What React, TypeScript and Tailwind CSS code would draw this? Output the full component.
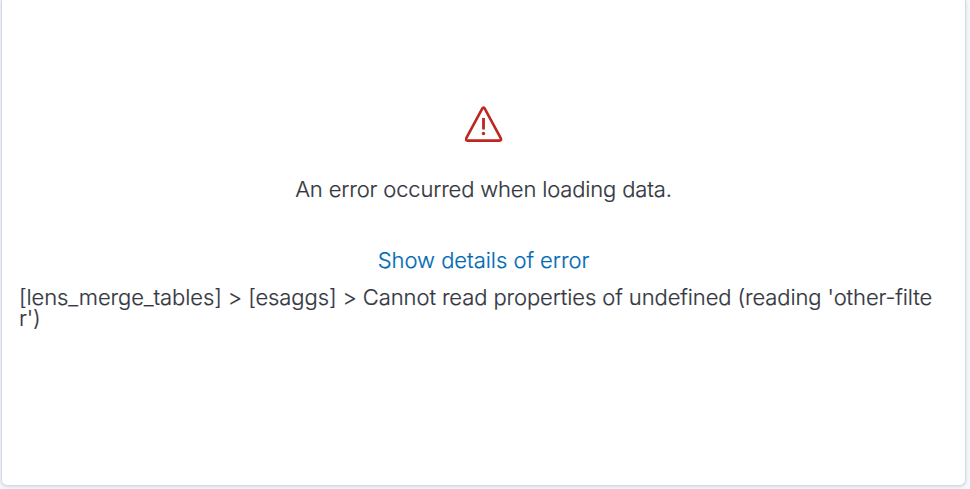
export default function App() {
  return (
    <div className="h-[489px] w-[970px] overflow-hidden bg-[#f7f9fc] pl-px font-['Inter',sans-serif] text-[22px] font-light leading-[21px] text-[#343741] [-webkit-text-stroke:0.2px]">
      <main className="flex h-[486px] w-[965px] flex-col items-center rounded-b-[6px] border border-t-0 border-[#d3dae6] bg-white pt-[106px] shadow-[0_1px_4px_rgba(152,162,179,0.35)]">
        <svg className="h-[37px] w-[38px]" viewBox="0 0 38 37" fill="none" stroke="#bd271e" aria-hidden="true">
          <path d="M17.1 2.8 1.3 32.2Q.2 34.6 2.5 34.6h32q2.3 0 1.2-2.4L19.9 2.8q-1.4-2.3-2.8 0Z" strokeWidth="2.6" />
          <path d="M18.5 12v11.5" strokeWidth="2.8" />
          <circle cx="18.5" cy="27.5" r="1.7" fill="#bd271e" stroke="none" />
        </svg>
        <p className="mt-[36px] whitespace-nowrap tracking-[-0.16px]">An error occurred when loading data.</p>
        <button className="mt-[50px] whitespace-nowrap tracking-[-0.04px] text-[#006bb4]">Show details of error</button>
        <p className="mt-[16px] w-full whitespace-nowrap pl-[17px] tracking-[-0.105px]">[lens_merge_tables] &gt; [esaggs] &gt; Cannot read properties of undefined (reading 'other-filte<br />r')</p>
      </main>
    </div>
  );
}
